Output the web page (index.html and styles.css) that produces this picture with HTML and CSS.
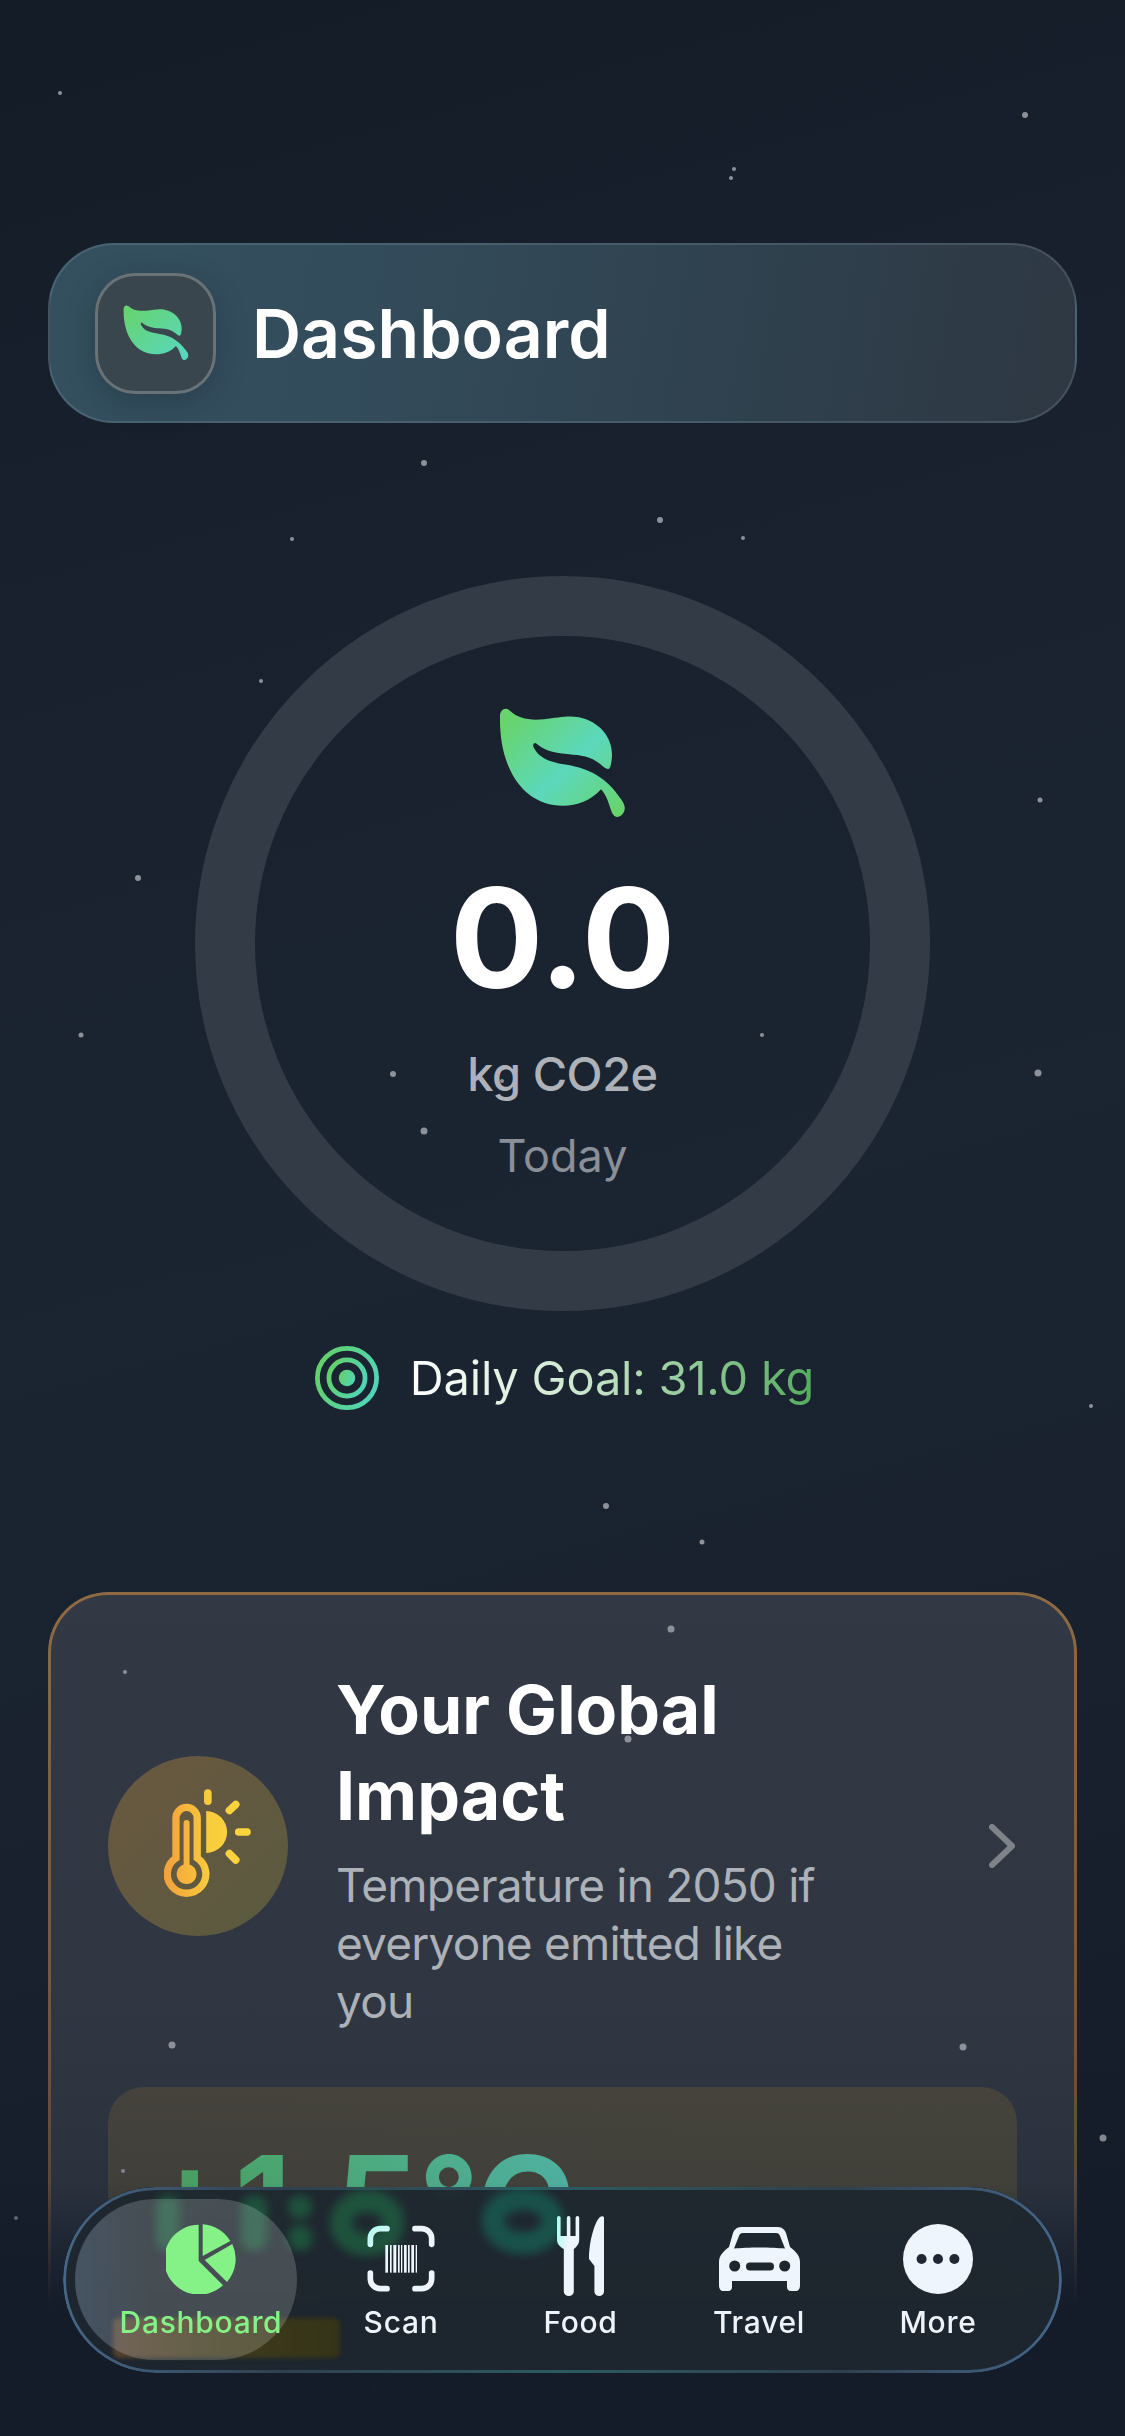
FILE: index.html
```html
<!DOCTYPE html>
<html lang="en">
<head>
<meta charset="utf-8">
<title>Dashboard</title>
<link rel="stylesheet" href="styles.css">
</head>
<body>
<svg class="defs" width="0" height="0" aria-hidden="true">
  <defs>
    <linearGradient id="leafA" x1="0" y1="0" x2="1" y2="1">
      <stop offset="0" stop-color="#68d36a"/><stop offset="1" stop-color="#56d8c4"/>
    </linearGradient>
    <linearGradient id="leafB" x1="0.05" y1="0.15" x2="0.95" y2="0.95">
      <stop offset="0" stop-color="#68d46e"/><stop offset="0.52" stop-color="#5cd8bc"/><stop offset="1" stop-color="#68d46e"/>
    </linearGradient>
    <linearGradient id="target" x1="0" y1="0.3" x2="1" y2="0.7">
      <stop offset="0" stop-color="#63d06a"/><stop offset="1" stop-color="#50d6b8"/>
    </linearGradient>
    <linearGradient id="heat" gradientUnits="userSpaceOnUse" x1="220" y1="330" x2="480" y2="330">
      <stop offset="0" stop-color="#f3a03c"/><stop offset="0.55" stop-color="#f9cd3e"/><stop offset="1" stop-color="#fbd63c"/>
    </linearGradient>
    <linearGradient id="scanTint" gradientUnits="userSpaceOnUse" x1="952" y1="137" x2="1040" y2="230">
      <stop offset="0" stop-color="#a8fbec"/><stop offset="0.7" stop-color="#eef5fc"/>
    </linearGradient>
    <linearGradient id="forkTint" x1="0" y1="0" x2="1" y2="0.4">
      <stop offset="0" stop-color="#a8fbf2"/><stop offset="0.55" stop-color="#eef5fc"/>
    </linearGradient>
    <linearGradient id="tagTint" x1="0" y1="0" x2="1" y2="0">
      <stop offset="0" stop-color="#6a4c30"/><stop offset="0.45" stop-color="#4c4319"/><stop offset="1" stop-color="#3d3a12"/>
    </linearGradient>
  </defs>
</svg>

<div class="screen">
  <main class="content">
    <header class="title-bar">
      <div class="title-icon">
        <svg class="leaf-small" viewBox="0 0 127 108"><path fill="url(#leafA)" d="M1 8C1 2 6-1 10 2C20 11 30 12 45 11C60 9 70 7 80 9C100 13 113 28 113 45C113 50 112 58 110 59C108 60 105 58 103 56C93 47 82 46 70 45C58 44 46 42 38 35C35 32 33 36 35 39C40 49 52 53 66 55C85 58 104 64 120 86C125 92 127 96 125 101C122 107 116 108 113 102C110 94 108 85 102 79C92 90 78 95 64 95C25 95 0 60 1 8Z"/></svg>
      </div>
      <h1 class="title">Dashboard</h1>
    </header>

    <section class="ring">
      <svg class="leaf-big" viewBox="0 0 127 108" preserveAspectRatio="none"><path fill="url(#leafB)" d="M1 8C1 2 6-1 10 2C20 11 30 12 45 11C60 9 70 7 80 9C100 13 113 28 113 45C113 50 112 58 110 59C108 60 105 58 103 56C93 47 82 46 70 45C58 44 46 42 38 35C35 32 33 36 35 39C40 49 52 53 66 55C85 58 104 64 120 86C125 92 127 96 125 101C122 107 116 108 113 102C110 94 108 85 102 79C92 90 78 95 64 95C25 95 0 60 1 8Z"/></svg>
      <div class="ring-value">0.0</div>
      <div class="ring-unit">kg CO2e</div>
      <div class="ring-period">Today</div>
    </section>

    <div class="goal">
      <svg class="goal-icon" viewBox="0 0 62 62">
        <circle cx="31" cy="31" r="28.7" fill="none" stroke="url(#target)" stroke-width="4.6"/>
        <circle cx="31" cy="31" r="17.5" fill="none" stroke="url(#target)" stroke-width="4.6"/>
        <circle cx="31" cy="31" r="8" fill="url(#target)"/>
      </svg>
      <span class="goal-text">Daily Goal: 31.0 kg</span>
    </div>

    <section class="impact">
      <div class="impact-row">
        <div class="impact-badge">
          <svg class="thermo" viewBox="220 148 262 324">
            <path fill="none" stroke="url(#heat)" stroke-width="22" d="M256 355V235a32 32 0 0 1 64 0V355a58 58 0 1 1-64 0Z"/>
            <path fill="url(#heat)" d="M279 250a9 9 0 0 1 18 0V375a30 30 0 1 1-18 0Z"/>
            <path fill="url(#heat)" d="M347 214a63 63 0 0 1 0 126Z"/>
            <g fill="none" stroke="url(#heat)" stroke-width="23" stroke-linecap="round">
              <path d="M352 160V184M417 212L436 194M445 277H470M417 342L436 361"/>
            </g>
          </svg>
        </div>
        <div class="impact-text">
          <h2 class="impact-title">Your Global Impact</h2>
          <p class="impact-sub">Temperature in 2050 if everyone emitted like you</p>
        </div>
        <svg class="chevron" viewBox="0 0 26 44"><path d="M3 3L23 22L3 41" fill="none" stroke="#7e838a" stroke-width="6" stroke-linecap="round" stroke-linejoin="round"/></svg>
      </div>
      <div class="impact-box">
        <div class="impact-temp">+1.5°C</div>
        <div class="impact-tag"></div>
      </div>
    </section>
  </main>

  <svg class="stars" viewBox="0 0 1125 2436" aria-hidden="true">
    <g fill="#8d929a">
      <circle cx="60" cy="93" r="2"/><circle cx="1025" cy="115" r="3"/><circle cx="734" cy="169" r="2"/><circle cx="731" cy="178" r="2"/>
      <circle cx="424" cy="463" r="3"/><circle cx="660" cy="520" r="3"/><circle cx="292" cy="539" r="2"/><circle cx="743" cy="538" r="2"/>
      <circle cx="261" cy="681" r="2"/><circle cx="1040" cy="800" r="2.5"/><circle cx="138" cy="878" r="3"/><circle cx="81" cy="1035" r="2.5"/>
      <circle cx="1038" cy="1073" r="3.5"/><circle cx="762" cy="1035" r="2"/><circle cx="393" cy="1074" r="3"/><circle cx="502" cy="1081" r="2"/>
      <circle cx="424" cy="1131" r="3.5"/><circle cx="1091" cy="1406" r="2"/><circle cx="606" cy="1506" r="3"/><circle cx="702" cy="1542" r="2.5"/>
      <circle cx="671" cy="1629" r="3.5"/><circle cx="125" cy="1672" r="2"/><circle cx="628" cy="1739" r="3.5"/><circle cx="172" cy="2045" r="3.5"/>
      <circle cx="963" cy="2047" r="3.5"/><circle cx="1103" cy="2138" r="3.5"/><circle cx="123" cy="2171" r="2"/><circle cx="16" cy="2218" r="2"/>
      <circle cx="270" cy="2377" r="2"/><circle cx="374" cy="2389" r="3.5"/>
    </g>
  </svg>
  <div class="fade"></div>

  <nav class="tabbar">
    <svg class="refraction" viewBox="0 0 999 185" aria-hidden="true">
      <rect class="refraction-tag" x="50" y="131" width="227" height="40" rx="6" fill="url(#tagTint)"/>
      <g class="refraction-shapes" fill="#1f7f4c">
        <rect x="93" y="8" width="24" height="56" rx="12"/>
        <rect x="178" y="8" width="26" height="56" rx="13"/>
        <rect x="225" y="8" width="24" height="24" rx="12"/><rect x="225" y="38" width="24" height="26" rx="12"/>
        <ellipse cx="304" cy="36" rx="26" ry="22" fill="none" stroke="#1f7f4c" stroke-width="22"/>
        <ellipse cx="460" cy="34" rx="30" ry="22" fill="none" stroke="#147c68" stroke-width="22"/>
      </g>
    </svg>
    <div class="tab-active"></div>
    <div class="tab tab-on">
      <svg class="tab-icon pie" viewBox="354 132 210 210">
        <path fill="#84f287" d="M452 134V243L525 316A105 105 0 1 1 452 134Z"/>
        <path fill="#84f287" d="M464 133V228L547 183A105 105 0 0 0 464 133Z"/>
        <path fill="#84f287" d="M470 240L553 192A105 105 0 0 1 537 306Z"/>
      </svg>
      <span class="tab-label">Dashboard</span>
    </div>
    <div class="tab">
      <svg class="tab-icon scan" viewBox="950 135 204 204">
        <g fill="none" stroke-width="17" stroke-linecap="round">
          <path stroke="url(#scanTint)" d="M1010 146H990A30 30 0 0 0 960 176V193"/>
          <path stroke="#eef5fc" d="M1094 146H1114A30 30 0 0 1 1144 176V193"/>
          <path stroke="#eef5fc" d="M1010 326H990A30 30 0 0 1 960 296V279"/>
          <path stroke="#eef5fc" d="M1094 326H1114A30 30 0 0 0 1144 296V279"/>
        </g>
        <g fill="#eef5fc">
          <rect x="1005" y="195" width="8" height="83"/><rect x="1019" y="195" width="5" height="83"/><rect x="1029" y="195" width="9" height="83"/>
          <rect x="1043" y="195" width="5" height="83"/><rect x="1052" y="195" width="4" height="83"/><rect x="1061" y="195" width="8" height="83"/>
          <rect x="1073" y="195" width="5" height="83"/><rect x="1083" y="195" width="8" height="83"/><rect x="1096" y="195" width="4" height="83"/>
        </g>
      </svg>
      <span class="tab-label">Scan</span>
    </div>
    <div class="tab">
      <svg class="tab-icon food" viewBox="0 0 47 80">
        <path fill="url(#forkTint)" d="M1.8 0A1.8 1.8 0 0 1 3.6 1.8V20H9.8V1.8A1.8 1.8 0 0 1 13.4 1.8V20H18.6V1.8A1.8 1.8 0 0 1 22.2 1.8V24C22.2 29 18 32 16.8 33V75.500A5 4.500 0 0 1 6.800 75.500V33C5 32 0 29 0 24V1.800A1.800 1.800 0 0 1 1.800 0Z"/>
        <path fill="#eef5fc" d="M47 2V75.500A4.800 4.500 0 0 1 37.400 75.500V50L32 43C32 25 38 5 43 1C45-.5 47 0 47 2Z"/>
      </svg>
      <span class="tab-label">Food</span>
    </div>
    <div class="tab">
      <svg class="tab-icon car" viewBox="0 0 81 64">
        <path fill="#eef5fc" fill-rule="evenodd" d="M22 0H59C63 0 66 3 67 6L71 20C76 24 81 28 81 35V59C81 62 79 64 77 64H72C69 64 68 62 68 60V54H13V60C13 62 12 64 9 64H4C2 64 0 62 0 59V35C0 28 5 24 10 20L14 6C15 3 18 0 22 0ZM24 6C22 6 20.500 7 20 9L15 21.500C28 20 53 20 66 21.500L61 9C60.500 7 59 6 57 6ZM15.700 33.500A5.500 5.500 0 1 0 15.700 44.500A5.500 5.500 0 1 0 15.700 33.500ZM65.700 33.500A5.500 5.500 0 1 0 65.700 44.500A5.500 5.500 0 1 0 65.700 33.500ZM31 35.500A4 4 0 0 0 31 43.500H51A4 4 0 0 0 51 35.500Z"/>
      </svg>
      <span class="tab-label">Travel</span>
    </div>
    <div class="tab">
      <svg class="tab-icon more" viewBox="0 0 70 70">
        <circle cx="35" cy="35" r="35" fill="#eef5fc"/>
        <circle cx="18.600" cy="35" r="5" fill="#1f2833"/><circle cx="35" cy="35" r="5" fill="#1f2833"/><circle cx="51.400" cy="35" r="5" fill="#1f2833"/>
      </svg>
      <span class="tab-label">More</span>
    </div>
  </nav>
</div>
</body>
</html>
```
FILE: styles.css
```css
* { box-sizing: border-box; }
html, body { margin: 0; padding: 0; background: #151d2a; }
.defs { position: absolute; }
.screen {
  position: relative;
  width: 1125px;
  height: 2436px;
  overflow: hidden;
  font-family: Inter, "Liberation Sans", sans-serif;
  background: linear-gradient(165deg, #141c28 0%, #18212d 25%, #1b2431 50%, #18202e 75%, #131a27 100%);
}
.content { display: flex; flex-direction: column; padding: 243px 48px 0; }

.title-bar {
  display: flex;
  align-items: center;
  gap: 36px;
  height: 180px;
  padding-left: 45px;
  border-radius: 66px;
  border: 2px solid rgba(150, 175, 190, 0.22);
  background: linear-gradient(100deg, #34505f 0%, #334c5b 30%, #2f404d 70%, #2e3843 100%);
}
.title-icon {
  flex: none;
  display: flex;
  align-items: center;
  justify-content: center;
  width: 121px;
  height: 121px;
  border-radius: 40px;
  border: 3px solid rgba(255, 255, 255, 0.24);
  background: #3a464d;
  box-shadow: 0 8px 30px rgba(15, 25, 35, 0.25);
}
.leaf-small { width: 66px; height: 56px; }
.title { margin: 0; font-size: 68px; line-height: 80px; font-weight: 600; color: #fff; }

.ring {
  display: flex;
  flex-direction: column;
  align-items: center;
  align-self: center;
  width: 735px;
  height: 735px;
  margin-top: 153px;
  border: 60px solid #333b46;
  border-radius: 50%;
}
.leaf-big { flex: none; width: 127px; height: 111px; margin-top: 72px; }
.ring-value { margin-top: 32px; font-size: 139px; line-height: 174px; font-weight: 700; color: #fff; }
.ring-unit { margin-top: 21px; font-size: 47px; line-height: 56px; font-weight: 450; letter-spacing: -0.5px; color: #aeb2b8; }
.ring-period { margin-top: 26px; font-size: 45px; line-height: 56px; font-weight: 400; color: #8a8f98; }

.goal { display: flex; align-items: center; align-self: center; gap: 31px; margin-top: 35px; margin-left: 4px; height: 64px; }
.goal-icon { flex: none; width: 64px; height: 64px; }
.goal-text {
  font-size: 47px;
  line-height: 56px;
  font-weight: 400;
  letter-spacing: -0.2px;
  color: transparent;
  background: linear-gradient(90deg, #ffffff 0%, #cfe8d0 40%, #54ab5e 100%);
  -webkit-background-clip: text;
  background-clip: text;
}

.impact {
  position: relative;
  margin-top: 182px;
  height: 1000px;
  padding: 69px 60px 60px;
  border-radius: 60px;
  background: linear-gradient(180deg, #323945 0%, #2e3541 60%, #242c39 100%);
}
.impact::before {
  content: "";
  position: absolute;
  inset: 0;
  padding: 3px;
  border-radius: 60px;
  background: linear-gradient(180deg, #8f6a42 0%, #6e5239 50%, #3b3c40 100%);
  -webkit-mask: linear-gradient(#000 0 0) content-box, linear-gradient(#000 0 0);
  -webkit-mask-composite: xor;
  mask-composite: exclude;
}
.impact-row { display: flex; align-items: center; }
.impact-badge {
  flex: none;
  display: flex;
  align-items: center;
  justify-content: center;
  width: 180px;
  height: 180px;
  border-radius: 50%;
  background: linear-gradient(135deg, #6a5840 0%, #595a3f 100%);
}
.thermo { width: 87px; height: 108px; margin-left: 18px; margin-top: -5px; }
.impact-text { flex: none; width: 500px; margin-left: 48px; padding-top: 5px; }
.impact-title { margin: 0; font-size: 68px; line-height: 86px; font-weight: 700; color: #fff; }
.impact-sub { margin: 18px 0 0; font-size: 46px; line-height: 58px; font-weight: 400; letter-spacing: -0.8px; color: #adb1b8; }
.chevron { flex: none; width: 26px; height: 44px; margin-left: 153px; }

.impact-box {
  position: relative;
  height: 334px;
  margin-top: 57px;
  padding: 36px 37px 0;
  border-radius: 36px;
  background: linear-gradient(170deg, #47443d 0%, #47473b 100%);
}
.impact-temp {
  display: inline-block;
  font-size: 132px;
  line-height: 160px;
  font-weight: 700;
  color: transparent;
  background: linear-gradient(90deg, #4fae63 0%, #53bb88 50%, #56c2b0 100%);
  -webkit-background-clip: text;
  background-clip: text;
}
.impact-tag { width: 184px; height: 40px; margin-top: 35px; border-radius: 8px; background: #c89a10; }

.stars { position: absolute; inset: 0; width: 1125px; height: 2436px; pointer-events: none; }
.fade {
  position: absolute;
  left: 0;
  right: 0;
  bottom: 0;
  height: 390px;
  background: linear-gradient(180deg, rgba(20, 27, 41, 0) 0%, rgba(20, 27, 41, 0.12) 35%, rgba(20, 27, 41, 0.97) 66%, #141b29 100%);
}

.tabbar {
  position: absolute;
  left: 63px;
  top: 2187px;
  display: grid;
  grid-template-columns: 200px 200px 159px 198px 160px;
  width: 999px;
  height: 186px;
  padding-left: 38px;
  border-radius: 93px;
  background: rgba(30, 38, 47, 0.96);
  backdrop-filter: blur(8px);
  overflow: hidden;
}
.tabbar::before {
  content: "";
  position: absolute;
  inset: 0;
  padding: 3px;
  border-radius: 93px;
  background: linear-gradient(90deg, #456686 0%, #2f4150 22%, #2c5a62 50%, #2f4150 78%, #45668a 100%);
  -webkit-mask: linear-gradient(#000 0 0) content-box, linear-gradient(#000 0 0);
  -webkit-mask-composite: xor;
  mask-composite: exclude;
}
.refraction { position: absolute; left: 0; top: 0; width: 999px; height: 185px; }
.refraction-shapes { filter: blur(5px); opacity: 0.5; }
.refraction-tag { opacity: 0.75; filter: blur(2px); }
.tab-active {
  position: absolute;
  left: 12px;
  top: 12px;
  width: 222px;
  height: 161px;
  border-radius: 80px;
  background:
    linear-gradient(90deg, rgba(70, 110, 150, 0.22) 0%, rgba(70, 110, 150, 0) 35%),
    rgba(255, 255, 255, 0.18);
}
.tab { position: relative; display: flex; flex-direction: column; align-items: center; }
.tab-icon { position: relative; display: block; flex: none; }
.pie { width: 70px; height: 70px; margin-top: 37px; }
.scan { width: 68px; height: 68px; margin-top: 38px; }
.food { width: 47px; height: 80px; margin-top: 29px; }
.car { width: 81px; height: 64px; margin-top: 40px; }
.more { width: 70px; height: 70px; margin-top: 37px; }
.tab-label {
  position: absolute;
  top: 117px;
  font-size: 30px;
  line-height: 36px;
  font-weight: 500;
  letter-spacing: 0.7px;
  color: #eef3fa;
  white-space: nowrap;
}
.tab-on .tab-label { color: #84f287; }
```
